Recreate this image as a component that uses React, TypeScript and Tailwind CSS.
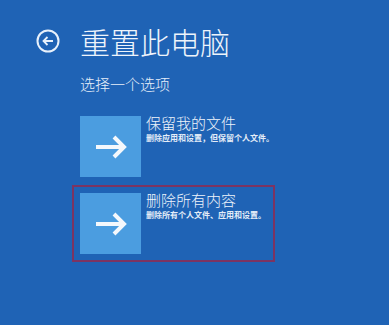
const font = { fontFamily: '"Noto Sans CJK SC", "Noto Sans", sans-serif' };

function BackIcon() {
  return (
    <svg width="24" height="24" viewBox="0 0 24 24" fill="none" stroke="#e8f1fb" strokeWidth="2">
      <circle cx="12" cy="12" r="10.5" />
      <path d="M17 12H7.5M11.5 8l-4 4 4 4" strokeWidth="1.8" />
    </svg>
  );
}

function Arrow() {
  return (
    <svg width="34" height="26" viewBox="0 0 34 26" fill="none" stroke="#f4f8fc" strokeWidth="4">
      <path d="M2 13H30" />
      <path d="M20 3l10 10-10 10" strokeLinejoin="miter" />
    </svg>
  );
}

function Option({
  title,
  desc,
  selected,
}: {
  title: string;
  desc: string;
  selected?: boolean;
}) {
  return (
    <div
      className={`flex w-[203px] border-2 p-[6px] ${
        selected ? "border-[#7c3462]" : "border-transparent"
      }`}
    >
      <div className="flex h-[61px] w-[61px] shrink-0 items-center justify-center bg-[#4b9de0]">
        <Arrow />
      </div>
      <div className="ml-[5px] flex flex-col">
        <div className="mt-[-2px] text-[15px] leading-[18px] font-light text-[#eef4fb]">{title}</div>
        <div className="mt-[1px] text-[8px] leading-[10px] font-bold whitespace-nowrap text-[#e4edf8]">
          {desc}
        </div>
      </div>
    </div>
  );
}

export default function App() {
  return (
    <div className="h-[325px] w-[389px] overflow-hidden bg-[#1f63b5] text-white" style={font}>
      <div className="flex items-center pt-[21px] pl-[36px]">
        <BackIcon />
        <h1 className="ml-[20px] text-[30px] leading-[40px] font-light text-[#eef4fb]">重置此电脑</h1>
      </div>
      <div className="mt-[13px] pl-[80px] text-[15px] leading-[20px] font-light text-[#e6eef9]">选择一个选项</div>
      <div className="mt-[14px] flex flex-col pl-[72px]">
        <Option title="保留我的文件" desc="删除应用和设置，但保留个人文件。" />
        <Option title="删除所有内容" desc="删除所有个人文件、应用和设置。" selected />
      </div>
    </div>
  );
}
